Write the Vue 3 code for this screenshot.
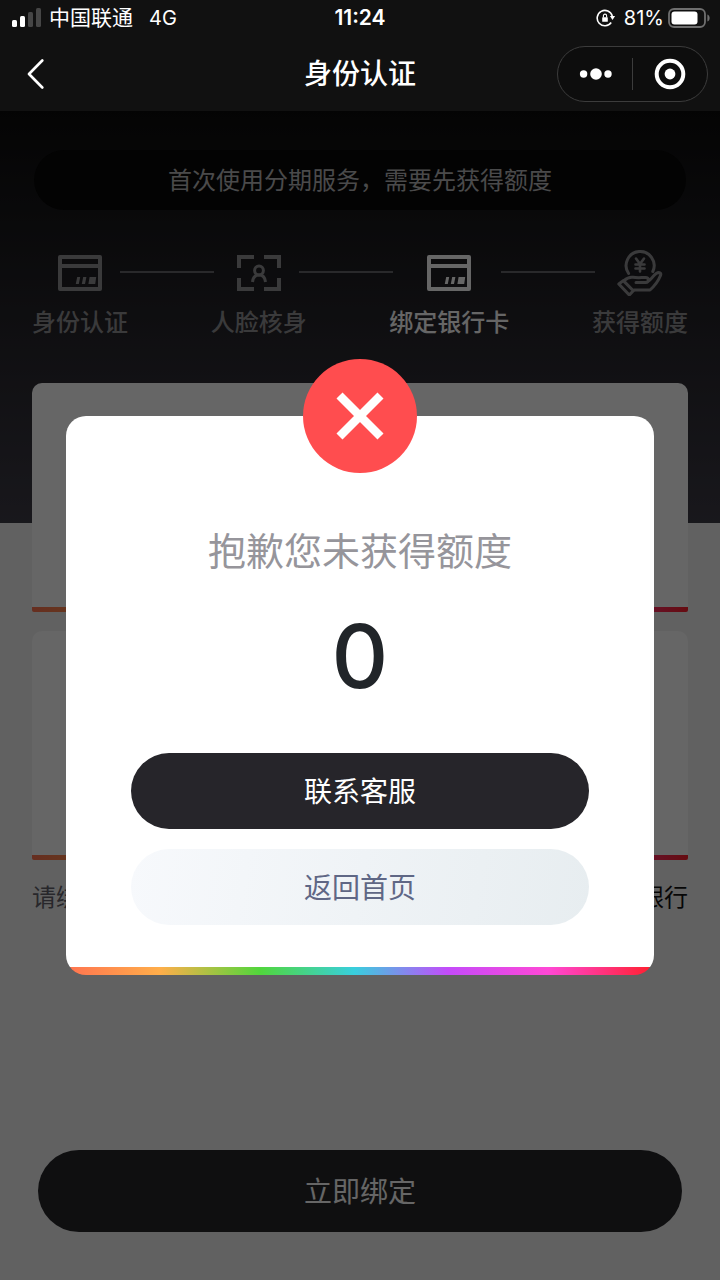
<template>
  <div class="page">
    <header class="header">
      <!-- Status bar -->
      <div class="status">
        <div class="status-left">
          <svg class="signal" width="32" height="20" viewBox="0 0 32 20" fill="#fff">
            <rect x="2" y="12" width="5" height="7" rx="1.5" />
            <rect x="10" y="8" width="5" height="11" rx="1.5" />
            <rect x="18" y="4" width="5" height="15" rx="1.5" fill="#464646" />
            <rect x="26" y="0" width="5" height="19" rx="1.5" fill="#464646" />
          </svg>
          <span>中国联通</span>
          <span class="network">4G</span>
        </div>
        <span class="time">11:24</span>
        <div class="status-right">
          <svg width="20" height="20" viewBox="0 0 20 20" fill="none">
            <path d="M15.2 14.500A7.700 7.700 0 1 1 16.300 8" stroke="#fff" stroke-width="1.600" />
            <path d="M13.900 8h5.200l-2.600 4z" fill="#fff" />
            <rect x="6.200" y="9.200" width="5.600" height="4.600" rx=".6" fill="#fff" />
            <path d="M7.400 9.400V7.700a1.600 1.600 0 0 1 3.200 0v1.700" stroke="#fff" stroke-width="1.100" />
          </svg>
          <span class="percent">81%</span>
          <svg width="42" height="20" viewBox="0 0 42 20" fill="none">
            <rect x="1" y="1" width="36" height="18" rx="5" stroke="#6f6f6f" stroke-width="1.800" />
            <rect x="3.500" y="3.500" width="26" height="13" rx="3" fill="#fff" />
            <path d="M39.400 6.500c3 1 3 6 0 7z" fill="#6f6f6f" />
          </svg>
        </div>
      </div>

      <!-- Navigation bar -->
      <div class="nav">
        <button class="back" type="button" aria-label="返回">
          <svg width="18" height="30" viewBox="0 0 18 30" fill="none">
            <path d="M15.300 1.500 2 15l13.300 13.500" stroke="#fff" stroke-width="2.600" stroke-linecap="round" stroke-linejoin="round" />
          </svg>
        </button>
        <h1 class="nav-title">身份认证</h1>
        <div class="capsule">
          <button type="button" aria-label="更多">
            <svg width="34" height="32" viewBox="0 0 34 32" fill="#fff">
              <circle cx="5.600" cy="16" r="3.700" />
              <circle cx="18" cy="16" r="5.800" />
              <circle cx="30" cy="16" r="3.700" />
            </svg>
          </button>
          <span class="capsule-line"></span>
          <button type="button" aria-label="关闭">
            <svg width="32" height="32" viewBox="0 0 32 32" fill="none">
              <circle cx="16" cy="16" r="13.300" stroke="#fff" stroke-width="4" />
              <circle cx="16" cy="16" r="5.400" fill="#fff" />
            </svg>
          </button>
        </div>
      </div>
    </header>

    <main class="content">
      <p class="banner">首次使用分期服务，需要先获得额度</p>

      <ol class="steps">
        <li v-for="step in steps" :key="step.label" class="step" :class="{ active: step.active }">
          <svg v-if="step.icon === 'card'" class="step-icon" viewBox="0 0 48 48" fill="none" stroke="currentColor">
            <rect x="4" y="9" width="40" height="32" stroke-width="4" stroke-linejoin="round" />
            <path d="M4 18h40" stroke-width="4" />
            <path d="M21.200 29h3l-1.400 7h-3zM27.200 29h3.200l-1.400 7h-3.200zM33.600 29h6.600l-1 7h-6.800z" fill="currentColor" stroke="none" />
          </svg>
          <svg v-else-if="step.icon === 'face'" class="step-icon" viewBox="0 0 48 48" fill="none" stroke="currentColor">
            <path d="M19 9H4v11M29 9h15v11M19 41H4V30M29 41h15V30" stroke-width="4" />
            <circle cx="24" cy="22.500" r="4.400" stroke-width="3" />
            <path d="M17.500 34c.4-4.200 2.400-7 6.500-7s6.100 2.800 6.500 7" stroke-width="3" />
          </svg>
          <svg v-else class="step-icon" viewBox="0 0 48 48" fill="none" stroke="currentColor" stroke-width="3" stroke-linejoin="round" stroke-linecap="round">
            <path d="M12.600 25.500A14 14 0 1 1 36.800 23.500" />
            <path d="m20 10.500 4 5.500 4-5.500M24 16v7.500M19.500 16.500h9M19.500 20.500h9" stroke-width="2.600" />
            <path d="m2.800 36 4.500-3.400 10 10.200-4 4.200z" />
            <path d="M8 32.600c3-2.600 5.600-3.800 9-3.300 4 .7 8.500.2 12.500.2 3.500 0 4.300 4.700 0 5H20M32 33.500c3-1.500 5-6 8.500-8.200 2.500-1.400 5.300-.4 4 2.200-2 5-6 10.500-10.500 14.500H18" />
          </svg>
          <span class="step-label">{{ step.label }}</span>
        </li>
      </ol>

      <section class="card"></section>
      <section class="card"></section>

      <div class="note">
        <span>请绑定</span>
        <a href="#">银行</a>
      </div>

      <button class="submit" type="button">立即绑定</button>

      <!-- Result dialog -->
      <div class="mask">
        <div class="dialog" role="dialog" aria-labelledby="dialog-title">
          <svg class="dialog-badge" viewBox="0 0 114 114" fill="none">
            <circle cx="57" cy="57" r="57" fill="#ff4d4f" />
            <path d="m36.500 36.500 41 41M77.500 36.500l-41 41" stroke="#fff" stroke-width="8.500" />
          </svg>
          <h2 id="dialog-title" class="dialog-title">抱歉您未获得额度</h2>
          <p class="amount">{{ amount }}</p>
          <div class="actions">
            <button class="action dark" type="button">联系客服</button>
            <button class="action light" type="button">返回首页</button>
          </div>
        </div>
      </div>
    </main>
  </div>
</template>

<script setup>
import { ref } from 'vue';

const amount = ref(0);

const steps = [
  { label: '身份认证', icon: 'card', active: false },
  { label: '人脸核身', icon: 'face', active: false },
  { label: '绑定银行卡', icon: 'card', active: true },
  { label: '获得额度', icon: 'money', active: false },
];
</script>

<style>
body {
  margin: 0;
}
</style>

<style scoped>
.page {
  --rainbow: linear-gradient(90deg, #ff7350 0%, #ffae4a 16%, #51d63c 33%, #38cfdd 49%, #c44bfa 65%, #ff48d5 82%, #ff1f2c 100%);
  display: flex;
  flex-direction: column;
  min-height: 100vh;
  font-family: Inter, "Noto Sans CJK SC", sans-serif;
}

.page *,
.page {
  box-sizing: border-box;
}

button {
  padding: 0;
  border: 0;
  background: none;
  color: inherit;
  font: inherit;
  cursor: pointer;
}

svg {
  display: block;
}

.header {
  background: #111;
  color: #fff;
}

.status {
  display: grid;
  grid-template-columns: 1fr auto 1fr;
  align-items: center;
  height: 36px;
  padding: 0 10px;
  font-size: 21px;
  line-height: 24px;
}

.status-left,
.status-right {
  display: flex;
  align-items: center;
}

.status-right {
  justify-content: flex-end;
  font-size: 20px;
}

.signal {
  margin-right: 7px;
}

.network {
  margin-left: 16px;
  font-size: 20px;
}

.time {
  font-weight: 600;
}

.percent {
  margin: 0 4px 0 8px;
}

.nav {
  display: grid;
  grid-template-columns: 1fr auto 1fr;
  align-items: center;
  height: 75px;
  padding: 0 12px;
}

.back {
  justify-self: start;
  padding: 8px 15px;
}

.nav-title {
  margin: 0;
  font-size: 28px;
  font-weight: 500;
  line-height: 40px;
}

.capsule {
  display: flex;
  justify-self: end;
  align-items: center;
  width: 151px;
  height: 56px;
  border: 1px solid #3c3c3c;
  border-radius: 28px;
  background: #0d0d0d;
}

.capsule button {
  display: flex;
  flex: 1;
  justify-content: center;
}

.capsule-line {
  width: 1px;
  height: 32px;
  background: #3c3c3c;
}

.content {
  position: relative;
  display: flex;
  flex: 1;
  flex-direction: column;
  padding: 39px 32px 48px;
  background: linear-gradient(#0c0c0c, #3e3c47) no-repeat top / 100% 412px #f3f3f3;
}

.banner {
  margin: 0 2px;
  padding-top: 2px;
  border-radius: 30px;
  background: #080808;
  color: #bababc;
  font-size: 24px;
  line-height: 58px;
  text-align: center;
}

.steps {
  display: flex;
  justify-content: space-between;
  margin: 38px 0 44px;
  padding: 0;
  color: #929295;
  list-style: none;
}

.step {
  position: relative;
  display: flex;
  flex-direction: column;
  align-items: center;
  gap: 11px;
}

/* connector to the next step */
.step:not(:last-child)::after {
  content: "";
  position: absolute;
  top: 23px;
  left: calc(100% - 8px);
  width: 94px;
  height: 2px;
  background: #68686c;
}

.step.active {
  color: #fff;
}

.step-icon {
  width: 48px;
  height: 48px;
}

.step-label {
  font-size: 24px;
  font-weight: 500;
  line-height: 32px;
}

.card {
  height: 229px;
  margin-bottom: 19px;
  border-radius: 10px 10px 2px 2px;
  background: var(--rainbow) no-repeat bottom / 100% 5px #fff;
}

.note {
  display: flex;
  justify-content: space-between;
  padding-top: 3px;
  color: #64636d;
  font-size: 24px;
  line-height: 32px;
}

.note a {
  color: #111;
  text-decoration: none;
}

.submit,
.action {
  padding-bottom: 2px;
  font-size: 28px;
}

.submit {
  height: 82px;
  margin: auto 6px 0;
  border-radius: 41px;
  background: #26262a;
  color: #fff;
}

.mask {
  position: absolute;
  inset: 0;
  display: flex;
  align-items: center;
  padding: 0 66px;
  background: rgba(0, 0, 0, 0.6);
}

.dialog {
  position: relative;
  flex: 1;
  padding: 107px 65px 50px;
  border-radius: 20px;
  background: var(--rainbow) no-repeat bottom / 100% 8px #fff;
  text-align: center;
}

.dialog-badge {
  position: absolute;
  top: -57px;
  left: calc(50% - 57px);
  width: 114px;
  height: 114px;
}

.dialog-title {
  margin: 0;
  color: #96959b;
  font-size: 38px;
  font-weight: 400;
  line-height: 56px;
}

.amount {
  margin: 29px 0 49px;
  color: #212529;
  font-size: 88px;
  font-weight: 500;
  line-height: 96px;
}

.actions {
  display: flex;
  flex-direction: column;
  gap: 20px;
}

.action {
  height: 76px;
  border-radius: 38px;
}

.dark {
  background: #26252a;
  color: #fff;
}

.light {
  background: linear-gradient(100deg, #f7f9fc, #e7edf0);
  color: #5f6785;
}
</style>
